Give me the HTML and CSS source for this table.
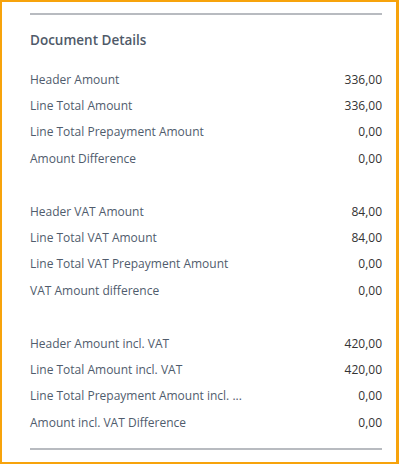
FILE: index.html
```html
<!DOCTYPE html>
<html>
<head>
<meta charset="utf-8">
<link rel="stylesheet" href="styles.css">
</head>
<body>
<div class="frame">
  <div class="panel">
    <div class="rule"></div>
    <h2 class="title">Document Details</h2>
    <div class="group">
      <div class="row"><span class="label">Header Amount</span><span class="value">336,00</span></div>
      <div class="row"><span class="label">Line Total Amount</span><span class="value">336,00</span></div>
      <div class="row"><span class="label">Line Total Prepayment Amount</span><span class="value">0,00</span></div>
      <div class="row"><span class="label">Amount Difference</span><span class="value">0,00</span></div>
    </div>
    <div class="group">
      <div class="row"><span class="label">Header VAT Amount</span><span class="value">84,00</span></div>
      <div class="row"><span class="label">Line Total VAT Amount</span><span class="value">84,00</span></div>
      <div class="row"><span class="label">Line Total VAT Prepayment Amount</span><span class="value">0,00</span></div>
      <div class="row"><span class="label">VAT Amount difference</span><span class="value">0,00</span></div>
    </div>
    <div class="group last">
      <div class="row"><span class="label">Header Amount incl. VAT</span><span class="value">420,00</span></div>
      <div class="row"><span class="label">Line Total Amount incl. VAT</span><span class="value">420,00</span></div>
      <div class="row"><span class="label trunc">Line Total Prepayment Amount incl. ...</span><span class="value">0,00</span></div>
      <div class="row"><span class="label">Amount incl. VAT Difference</span><span class="value">0,00</span></div>
    </div>
    <div class="rule bottom"></div>
  </div>
</div>
</body>
</html>
```

FILE: styles.css
```css
html, body {
  margin: 0;
  padding: 0;
  background: #ffffff;
}
body {
  font-family: "Open Sans", "Noto Sans", sans-serif;
}
.frame {
  box-sizing: border-box;
  width: 399px;
  height: 464px;
  border: 2px solid #f7a30c;
  border-right-width: 3px;
  background: #ffffff;
}
.panel {
  padding: 11px 14px 0 28px;
  display: flex;
  flex-direction: column;
}
.rule {
  height: 2px;
  background: #b8bbc0;
}
.rule.bottom {
  margin-top: 13px;
}
.title {
  margin: 15px 0 16px;
  font-size: 13.5px;
  line-height: 20px;
  font-weight: 600;
  color: #4f5a69;
}
.group {
  display: flex;
  flex-direction: column;
  margin-bottom: 26.4px;
}
.group.last {
  margin-bottom: 0;
}
.row {
  height: 26.4px;
  display: flex;
  align-items: center;
  justify-content: space-between;
  font-size: 12px;
}
.label {
  color: #505c6d;
  white-space: nowrap;
}
.value {
  color: #333333;
}
```
